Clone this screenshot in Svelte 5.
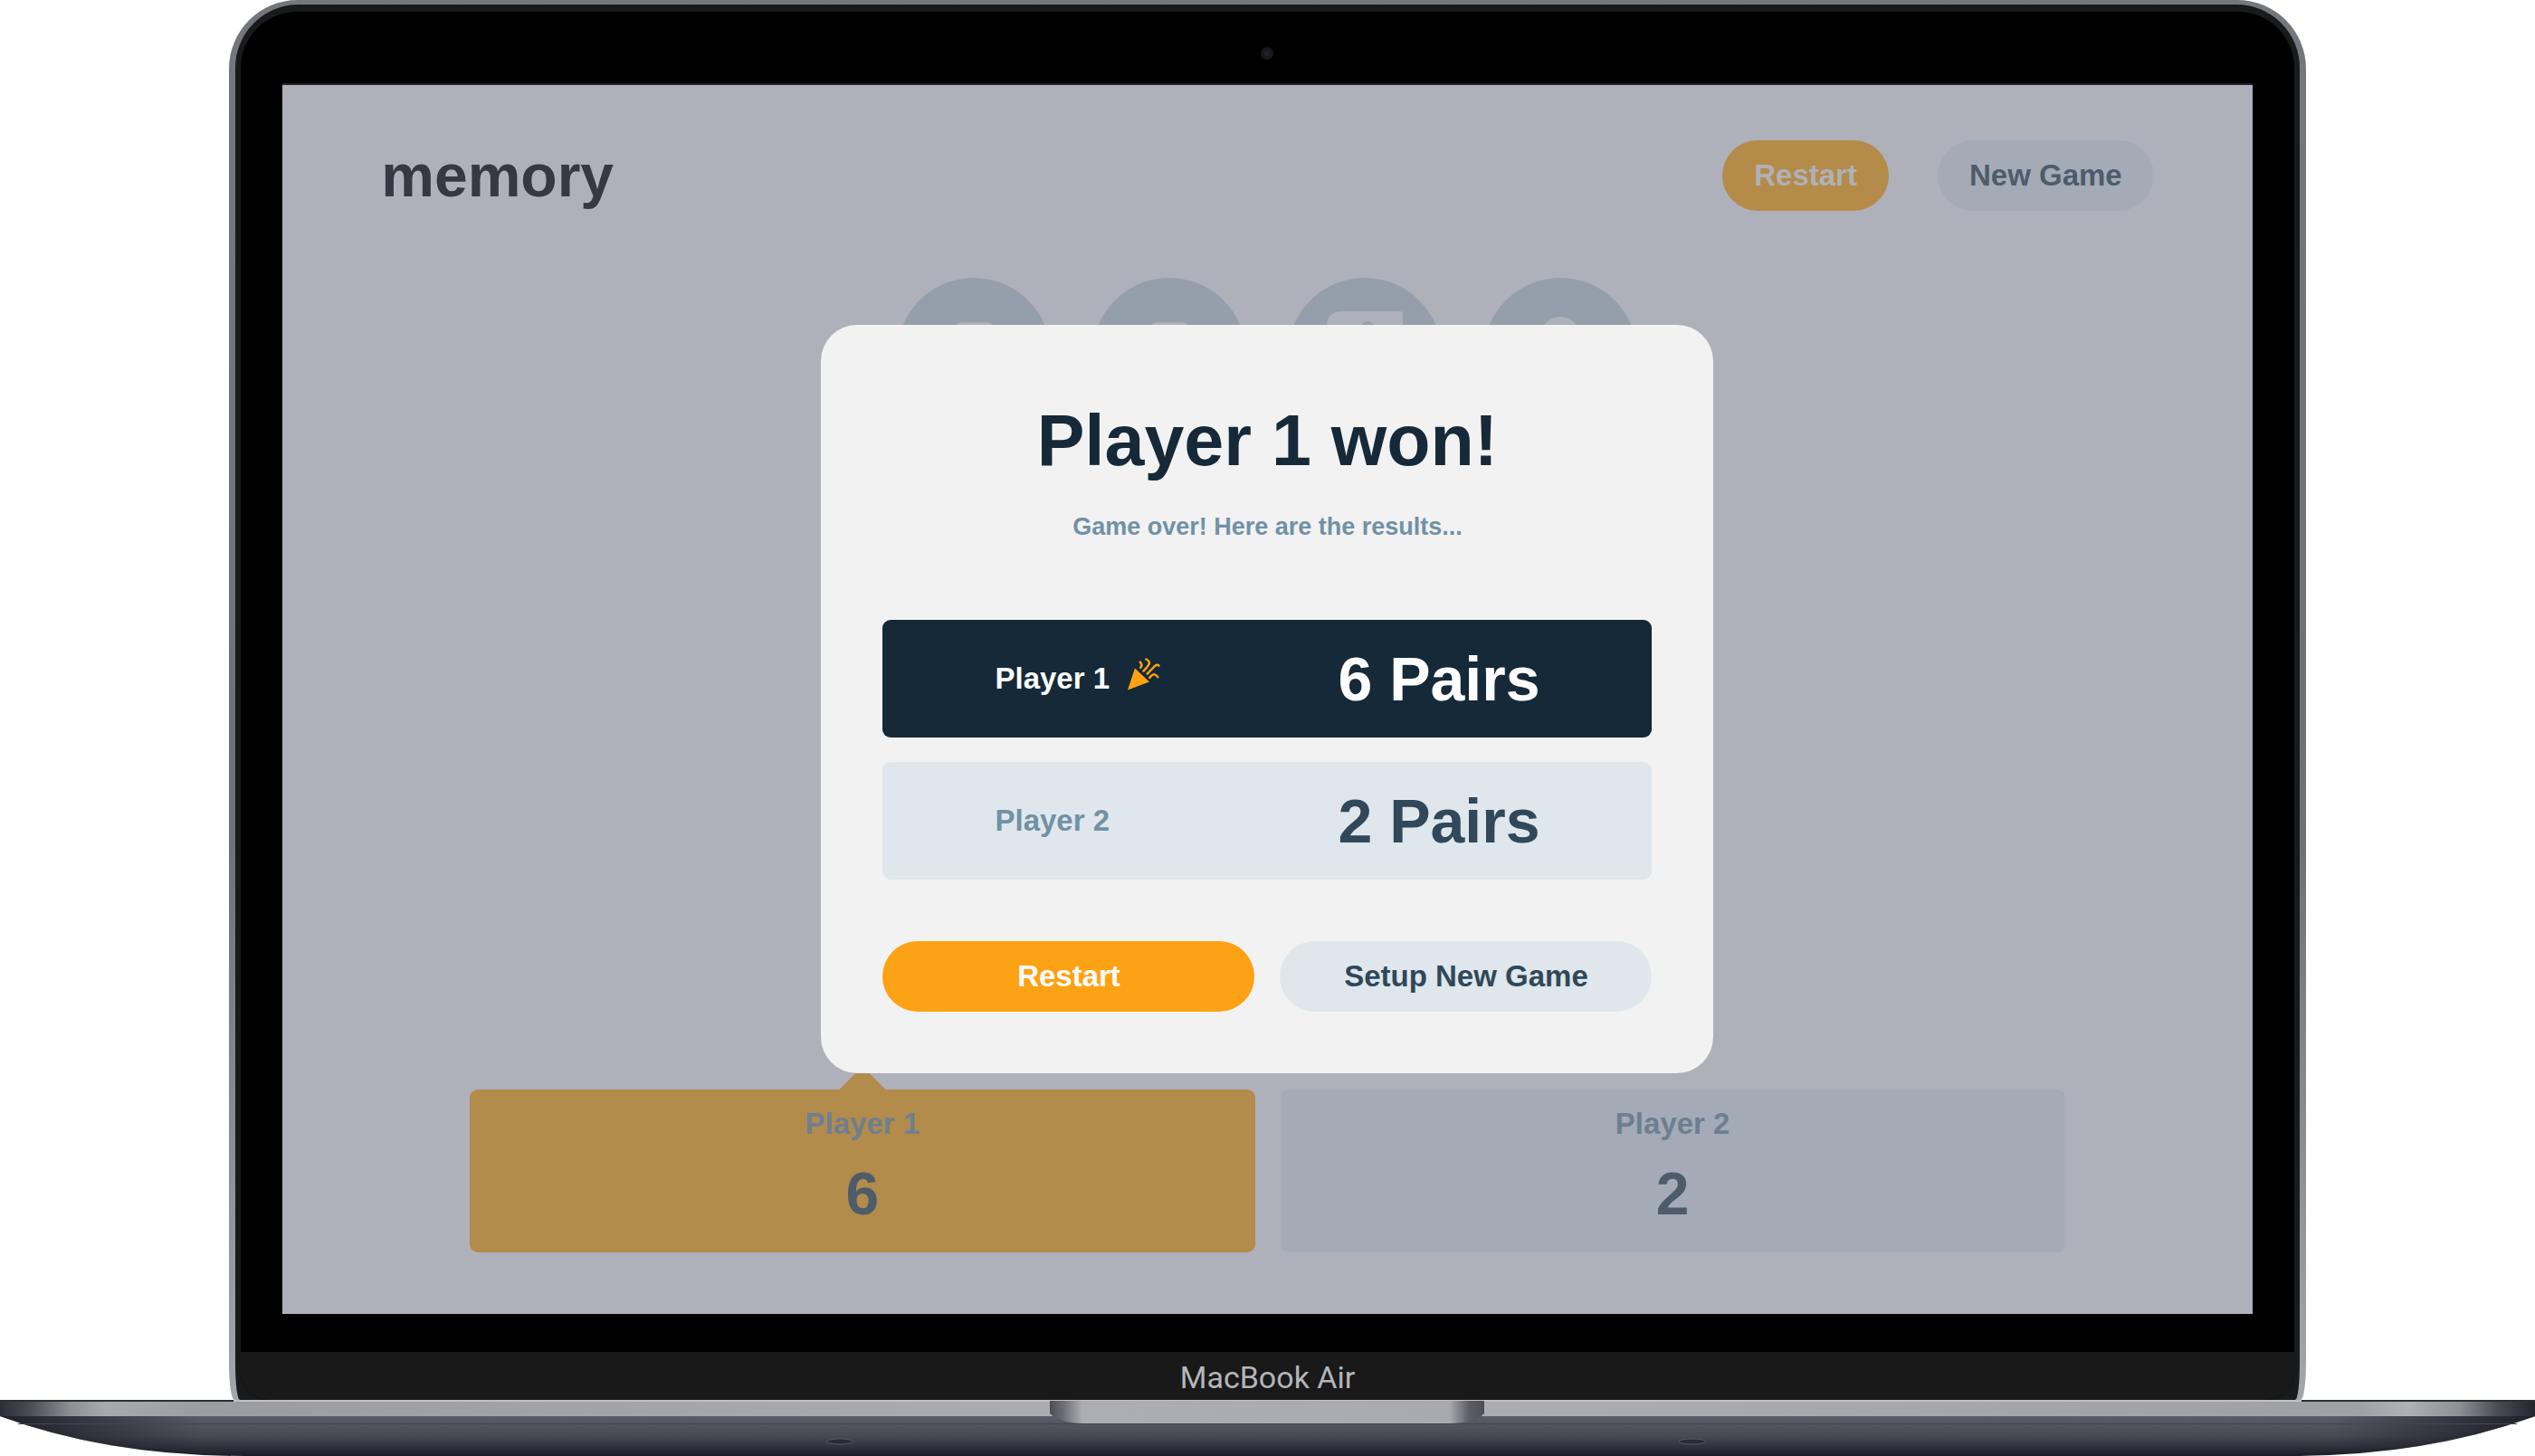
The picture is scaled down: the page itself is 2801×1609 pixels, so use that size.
<script>
  const cards = ['phone', 'phone', 'book', 'bulb'];
  const players = [
    { name: 'Player 1', pairs: 6, active: true },
    { name: 'Player 2', pairs: 2, active: false }
  ];
</script>

<div class="laptop">
  <div class="lid">
    <div class="rim">
      <div class="bezel">
        <div class="camera"></div>
        <div class="screen">
          <div class="game">
            <header>
              <h2 class="logo">memory</h2>
              <nav>
                <button class="pill dim-primary">Restart</button>
                <button class="pill dim-plain">New Game</button>
              </nav>
            </header>
            <div class="board">
              {#each cards as card}
                <div class="token">
                  <svg viewBox="0 0 170 170" aria-hidden="true">
                    {#if card === 'phone'}
                      <rect x="63" y="49" width="45" height="72" rx="9" />
                    {:else if card === 'book'}
                      <path d="M60 37h64a3 3 0 0 1 3 3v90H60q-17 0-17-17V54q0-17 17-17z" />
                      <circle class="hole" cx="88" cy="55" r="7" />
                    {:else}
                      <circle cx="85" cy="65" r="22" />
                    {/if}
                  </svg>
                </div>
              {/each}
            </div>
            <footer>
              {#each players as p}
                <div class="score" class:active={p.active}>
                  <span class="name">{p.name}</span>
                  <span class="count">{p.pairs}</span>
                </div>
              {/each}
            </footer>
          </div>
          <div class="overlay">
            <div class="modal" role="dialog" aria-labelledby="result-title">
              <h1 id="result-title">Player 1 won!</h1>
              <p>Game over! Here are the results...</p>
              <div class="results">
                {#each players as p}
                  <div class="result" class:winner={p.active}>
                    <span class="who">
                      {p.name}
                      {#if p.active}
                        <svg class="party" viewBox="0 0 36 36" aria-hidden="true">
                          <path fill="currentColor" d="M8 11.500 24 26.500 0 35.500z" />
                          <path
                            fill="none"
                            stroke="currentColor"
                            stroke-width="2.500"
                            stroke-linecap="round"
                            d="M13.700 4.700q3 3 .5 6M20.300 1.500q5 2.500 3 6-2 3.500-5.800 7M21.700 17.700 29.500 9.500q3-3 5-.8M24.300 22q4.500-7 9-.7"
                          />
                        </svg>
                      {/if}
                    </span>
                    <span class="pairs">{p.pairs} Pairs</span>
                  </div>
                {/each}
              </div>
              <div class="actions">
                <button class="pill primary">Restart</button>
                <button class="pill plain">Setup New Game</button>
              </div>
            </div>
          </div>
        </div>
        <div class="chin">MacBook Air</div>
      </div>
    </div>
  </div>
  <svg class="base" viewBox="0 0 2801 62" preserveAspectRatio="none" aria-hidden="true">
    <defs>
      <linearGradient id="edge">
        <stop offset="0" stop-color="#2b2d38" />
        <stop offset="0.012" stop-color="#4b4c56" />
        <stop offset="0.028" stop-color="#8f9096" />
        <stop offset="0.042" stop-color="#a9aaaf" />
        <stop offset="0.08" stop-color="#9c9da3" />
        <stop offset="0.5" stop-color="#b0b1b5" />
        <stop offset="0.93" stop-color="#a0a1a7" />
        <stop offset="0.95" stop-color="#b0b1b5" />
        <stop offset="0.97" stop-color="#8f9096" />
        <stop offset="0.985" stop-color="#4b4c56" />
        <stop offset="1" stop-color="#22242e" />
      </linearGradient>
      <linearGradient id="belly" x2="0" y2="1">
        <stop offset="0" stop-color="#5b5c65" />
        <stop offset="0.5" stop-color="#484952" />
        <stop offset="1" stop-color="#1c1c28" />
      </linearGradient>
      <linearGradient id="shade">
        <stop offset="0" stop-color="#181923" stop-opacity="0.9" />
        <stop offset="0.08" stop-color="#181923" stop-opacity="0" />
        <stop offset="0.92" stop-color="#181923" stop-opacity="0" />
        <stop offset="1" stop-color="#181923" stop-opacity="0.9" />
      </linearGradient>
      <linearGradient id="notch">
        <stop offset="0" stop-color="#4c4d57" />
        <stop offset="0.03" stop-color="#6b6c75" />
        <stop offset="0.075" stop-color="#adaeb3" />
        <stop offset="0.92" stop-color="#a9aaaf" />
        <stop offset="0.965" stop-color="#5c5d66" />
        <stop offset="1" stop-color="#4c4d57" />
      </linearGradient>
    </defs>
    <path fill="url(#belly)" d="M0 18Q120 62 270 62H2531Q2681 62 2801 18z" />
    <path fill="url(#shade)" d="M0 18Q120 62 270 62H2531Q2681 62 2801 18z" />
    <path fill="#44454f" d="M20 26H2781v1H20z" />
    <g fill="#2b2c36" stroke="#585963">
      <ellipse cx="928" cy="46" rx="15" ry="3" />
      <ellipse cx="1870" cy="46" rx="15" ry="3" />
    </g>
    <path fill="url(#edge)" d="M0 0H2801V18H0z" />
    <path fill="#2a302f" d="M0 0H258V2H0zM2543 0H2801V2H2543z" />
    <path fill="#c0c1c5" d="M258 0H2543V2H258z" />
    <path fill="url(#notch)" d="M1160 1H1640V15Q1628 26 1602 26H1198Q1172 26 1160 15z" />
  </svg>
</div>

<style>
  :global(body) {
    background: #fff;
  }
  .laptop {
    font-family: 'Liberation Sans', Arial, sans-serif;
    font-weight: 700;
    display: flex;
    flex-direction: column;
    align-items: center;
  }
  .lid {
    width: 81.9%;
    box-sizing: border-box;
    padding: 5px 7px 0;
    border-radius: 76px 76px 6px 6px / 76px 76px 40px 40px;
    background: linear-gradient(#76777e, #6f7077 60%, #a5a6ac);
  }
  .rim {
    padding: 8px 6px 0;
    border-radius: 70px 70px 5px 5px / 70px 70px 40px 40px;
    background: #191a1b;
  }
  .bezel {
    border-radius: 62px 62px 30px 30px;
    background: #000;
    overflow: hidden;
  }
  .camera {
    width: 14px;
    height: 14px;
    margin: 39px auto 26px;
    border: 4px solid #17181b;
    border-radius: 50%;
    background: #1e2030;
    box-sizing: border-box;
  }
  .screen {
    display: grid;
    margin: 0 46px 42px;
    border-top: 2px solid #24252a;
    background: #aeb1ba;
    aspect-ratio: 1280 / 800;
    box-sizing: border-box;
  }
  .game,
  .overlay {
    grid-area: 1 / 1;
  }
  .game {
    display: flex;
    flex-direction: column;
    padding: 61px 5% 68px;
  }
  header {
    display: flex;
    justify-content: space-between;
    align-items: center;
  }
  .logo {
    margin: 0;
    font-size: 66px;
    line-height: 78px;
    color: #363942;
  }
  nav {
    display: flex;
    gap: 54px;
  }
  .pill {
    height: 78px;
    padding: 0 35px;
    border: 0;
    border-radius: 39px;
    font: inherit;
    font-size: 33px;
    cursor: pointer;
  }
  .dim-primary {
    background: #b58b4a;
    color: #afb1b9;
  }
  .dim-plain {
    background: #a4abb6;
    color: #4d5c6b;
  }
  .board {
    display: flex;
    justify-content: center;
    gap: 46px;
    margin-top: 74px;
  }
  .token {
    width: 170px;
    height: 170px;
    border-radius: 50%;
    background: #949fab;
  }
  .token svg {
    display: block;
    fill: #aeb1ba;
  }
  .token .hole {
    fill: #949fab;
  }
  footer {
    display: flex;
    gap: 28px;
    margin: auto 5% 0;
  }
  .score {
    position: relative;
    flex: 1;
    display: flex;
    flex-direction: column;
    align-items: center;
    gap: 4px;
    height: 180px;
    padding-top: 18px;
    box-sizing: border-box;
    border-radius: 9px;
    background: #a4abb6;
  }
  .score.active {
    background: #b38b4a;
  }
  .score.active::before {
    content: '';
    position: absolute;
    top: -18px;
    left: calc(50% - 18px);
    width: 36px;
    height: 36px;
    background: #b38b4a;
    transform: rotate(45deg);
  }
  .name {
    position: relative;
    font-size: 33px;
    line-height: 40px;
    color: #6d7f91;
  }
  .count {
    font-size: 66px;
    line-height: 106px;
    color: #4d5c6b;
  }
  .overlay {
    display: grid;
    place-items: center;
    z-index: 1;
    padding-bottom: 2px;
  }
  .modal {
    width: 986px;
    max-width: 100%;
    padding: 80px 68px 68px;
    box-sizing: border-box;
    border-radius: 40px;
    background: #f2f2f2;
    text-align: center;
  }
  h1 {
    margin: 0;
    font-size: 79px;
    line-height: 96px;
    color: #152938;
  }
  p {
    margin: 30px 0 0;
    font-size: 27px;
    line-height: 34px;
    color: #7191a5;
  }
  .results {
    display: grid;
    gap: 27px;
    margin-top: 86px;
  }
  .result {
    display: flex;
    justify-content: space-between;
    align-items: center;
    height: 130px;
    padding: 0 124px;
    border-radius: 9px;
    background: #dfe7ec;
    color: #7191a5;
  }
  .result.winner {
    background: #152938;
    color: #fcfcfc;
  }
  .who {
    display: flex;
    gap: 20px;
    font-size: 33px;
  }
  .party {
    width: 36px;
    height: 36px;
    margin-bottom: 10px;
    align-self: center;
    color: #fda214;
  }
  .who,
  .pairs {
    align-items: center;
  }
  .pairs {
    font-size: 68px;
    color: #304859;
  }
  .winner .pairs {
    color: #fcfcfc;
  }
  .actions {
    display: grid;
    grid-template-columns: 1fr 1fr;
    gap: 28px;
    margin-top: 68px;
  }
  .primary {
    background: #fda214;
    color: #fcfcfc;
  }
  .plain {
    background: #dfe7ec;
    color: #304859;
  }
  .chin {
    height: 53px;
    background: #191919;
    font-family: Roboto, 'Liberation Sans', sans-serif;
    font-size: 34px;
    font-weight: 400;
    line-height: 56px;
    text-align: center;
    color: #b4b5ba;
  }
  .base {
    display: block;
    width: 100%;
    height: 62px;
  }
</style>
